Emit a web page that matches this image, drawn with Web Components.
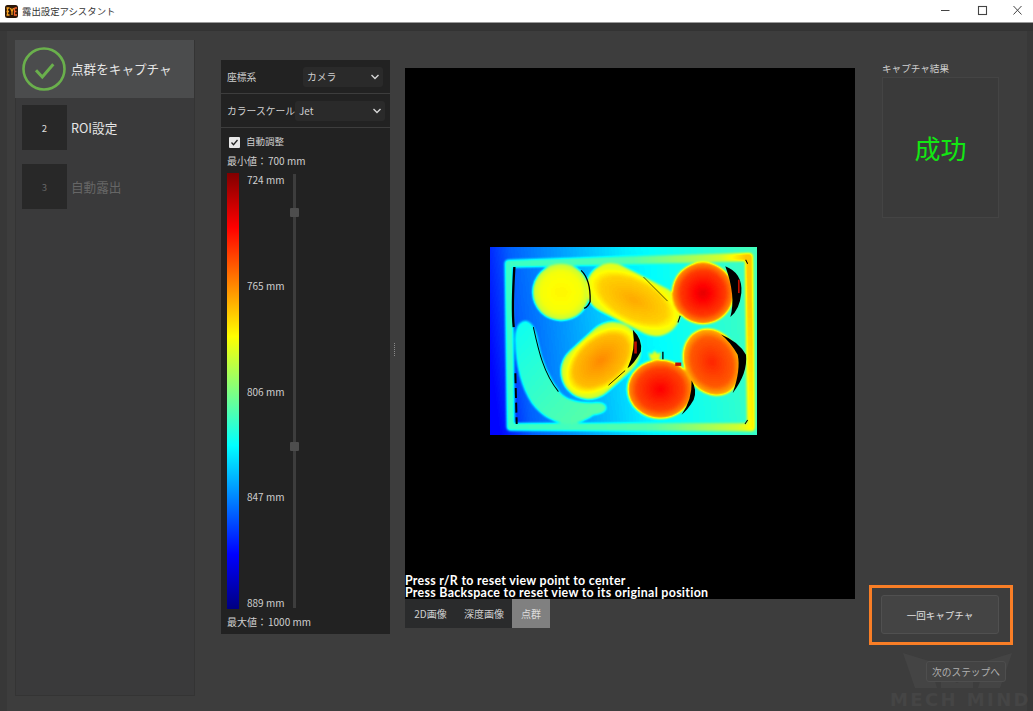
<!DOCTYPE html>
<html lang="ja">
<head>
<meta charset="utf-8">
<title>露出設定アシスタント</title>
<style>
  html, body { margin: 0; height: 100%; overflow: hidden; background: #383838; }
  body { font-family: "Noto Sans CJK JP", "Noto Sans", sans-serif; }
</style>
</head>
<body>
<assist-window>
  <title-bar slot="top">露出設定アシスタント</title-bar>
  <step-list slot="steps">
    <step-item state="done" label="点群をキャプチャ"></step-item>
    <step-item num="2" label="ROI設定"></step-item>
    <step-item num="3" state="off" label="自動露出"></step-item>
  </step-list>
  <depth-panel slot="panel"></depth-panel>
  <cloud-view slot="view"></cloud-view>
  <result-side slot="side"></result-side>
</assist-window>

<script>
const FONT = '"Noto Sans CJK JP", "Noto Sans", sans-serif';

class AssistWindow extends HTMLElement {
  connectedCallback() {
    this.attachShadow({ mode: 'open' });
    this.shadowRoot.innerHTML = `
      <style>
        :host { display: flex; flex-direction: column; width: 1033px; height: 711px; position: relative; overflow: hidden; background: #383838; }
        .strip { height: 8px; background: #333; flex: none; }
        .main { flex: 1; display: flex; min-height: 0; margin: 0 6px 0 7px; background: #3d3d3d; padding: 9px 0 15px 8px; align-items: stretch; }
        .steps { width: 180px; flex: none; margin-right: 26px; }
        .panel { width: 169px; flex: none; margin: 20px 15px 62px 0; }
        .view { width: 450px; flex: none; margin-top: 28px; }
        .side { flex: 1; min-width: 0; }
        .grip { position: absolute; left: 394px; top: 343px; width: 1px; height: 13px; border-left: 1px dotted #8a8a8a; }
      </style>
      <slot name="top"></slot>
      <div class="strip"></div>
      <div class="main">
        <div class="steps"><slot name="steps"></slot></div>
        <div class="panel"><slot name="panel"></slot></div>
        <div class="view"><slot name="view"></slot></div>
        <div class="side"><slot name="side"></slot></div>
      </div>
      <div class="grip"></div>
    `;
  }
}

class TitleBar extends HTMLElement {
  connectedCallback() {
    this.attachShadow({ mode: 'open' });
    this.shadowRoot.innerHTML = `
      <style>
        :host { display: flex; align-items: center; height: 22px; flex: none; background: #fff; border-bottom: 1px solid #9a9a9a; color: #333; font-size: 9.4px; }
        .logo { width: 13px; height: 13px; margin: 0 4px 0 5px; flex: none; }
        .name { flex: 1; }
        .btns { display: flex; }
        .btns svg { width: 36px; height: 22px; display: block; }
      </style>
      <svg class="logo" viewBox="0 0 13 13">
        <rect width="13" height="13" rx="2.500" fill="#2a1608"/>
        <path d="M1.500 3h3M2.500 3v7M1.500 6.500h2.500M1.500 10h3M5.500 3l1.500 3.500 1.500-3.500M7 6.500V10" stroke="#f7a01f" stroke-width="1.300" fill="none"/>
        <path d="M9.500 3h2.500M9.500 3v7h2.500M9.500 6.500h2" stroke="#f4642e" stroke-width="1.300" fill="none"/>
      </svg>
      <span class="name"><slot></slot></span>
      <div class="btns">
        <svg viewBox="0 0 36 22"><path d="M16 10.500h8.500" stroke="#444" fill="none"/></svg>
        <svg viewBox="0 0 36 22"><rect x="17.500" y="6.500" width="8" height="8" stroke="#444" fill="none" stroke-width="1.100"/></svg>
        <svg viewBox="0 0 36 22"><path d="M16.500 6l8 8.500M24.500 6l-8 8.500" stroke="#444" fill="none"/></svg>
      </div>
    `;
  }
}

class StepList extends HTMLElement {
  connectedCallback() {
    this.attachShadow({ mode: 'open' });
    this.shadowRoot.innerHTML = `
      <style>
        :host { display: block; box-sizing: border-box; height: 100%; background: #3a3a3b; box-shadow: inset 0 0 0 1px #343434; }
      </style>
      <slot></slot>
    `;
  }
}

class StepItem extends HTMLElement {
  connectedCallback() {
    const done = this.getAttribute('state') === 'done';
    const off = this.getAttribute('state') === 'off';
    const num = this.getAttribute('num');
    this.attachShadow({ mode: 'open' });
    this.shadowRoot.innerHTML = `
      <style>
        :host { display: flex; align-items: center; height: 59px; box-sizing: border-box; padding-left: 7px; font-size: 12.6px; color: ${off ? '#666' : '#e6e6e6'}; }
        :host([state="done"]) { height: 58px; background: #4b4c4d; margin-right: 1px; }
        .badge { width: 45px; height: 45px; flex: none; background: #282828; color: ${off ? '#666' : '#ddd'}; font-size: 9.5px; display: flex; align-items: center; justify-content: center; margin-right: 4px; }
        svg { width: 45px; height: 45px; flex: none; margin-right: 4px; }
        span { margin-top: -1px; }
      </style>
      ${done
        ? `<svg viewBox="0 0 45 45"><circle cx="22" cy="22" r="20.500" fill="none" stroke="#6ab04c" stroke-width="2.600"/><path d="M14 23.300l6.300 6.700L31.300 17.300" fill="none" stroke="#6ab04c" stroke-width="3"/></svg>`
        : `<div class="badge">${num}</div>`}
      <span>${this.getAttribute('label')}</span>
    `;
  }
}

class ComboRow extends HTMLElement {
  connectedCallback() {
    const w = this.getAttribute('box');
    this.attachShadow({ mode: 'open' });
    this.shadowRoot.innerHTML = `
      <style>
        :host { display: flex; align-items: center; background: #222; padding: 0 7px 0 6px; box-sizing: border-box; font-size: 9.8px; color: #d0d0d0; }
        .lab { flex: 1; white-space: nowrap; }
        .box { width: ${w}px; height: 20px; background: #2a2a2a; border-radius: 3px; display: flex; align-items: center; padding: 0 3px 0 4px; box-sizing: border-box; flex: none; }
        .box span { flex: 1; white-space: nowrap; }
        svg { width: 10px; height: 6px; }
      </style>
      <span class="lab">${this.getAttribute('label')}</span>
      <div class="box">
        <span>${this.getAttribute('value')}</span>
        <svg viewBox="0 0 10 6"><path d="M1.500 1l3.500 3.500L8.500 1" fill="none" stroke="#d5d5d5" stroke-width="1.400"/></svg>
      </div>
    `;
  }
}

class DepthPanel extends HTMLElement {
  connectedCallback() {
    this.attachShadow({ mode: 'open' });
    const labels = ['724', '765', '806', '847', '889'];
    this.shadowRoot.innerHTML = `
      <style>
        :host { display: flex; flex-direction: column; height: 100%; gap: 1px; font-size: 10px; color: #cfcfcf; }
        combo-row { height: 33px; flex: none; }
        .body { flex: 1; background: #222; padding: 8px 0 0 6px; display: flex; flex-direction: column; min-height: 0; }
        .auto { display: flex; align-items: center; gap: 6px; height: 12px; padding-left: 2px; }
        .auto span:last-child { margin-top: -2px; font-size: 9.5px; }
        .check { width: 11px; height: 11px; background: #e8e8e8; border-radius: 1px; display: flex; }
        .check svg { width: 11px; height: 11px; }
        .minmax { height: 14px; display: flex; align-items: center; margin: 5px 0 2px; white-space: nowrap; }
        .minmax b { font-weight: 400; margin-left: 1px; }
        .scale { flex: 1; display: flex; margin-top: 4px; min-height: 0; }
        .bar { width: 12px; flex: none; background: linear-gradient(to bottom, #800000 0%, #ff0000 12.5%, #ff8000 25%, #ffff00 37.500%, #80ff80 50%, #00ffff 62.5%, #0080ff 75%, #0000ff 87.5%, #000080 100%); }
        .ticks { width: 37px; margin: -1px 0 -1px 8px; display: flex; flex-direction: column; justify-content: space-between; white-space: nowrap; flex: none; }
        .track { width: 3px; margin: 1px 0 1px 9px; background: #3d3d3d; position: relative; }
        .knob { position: absolute; left: -3px; width: 9px; height: 9px; background: #4d4d4d; border-radius: 1px; }
        .bottom { height: 25px; display: flex; align-items: center; white-space: nowrap; }
        .bottom b { font-weight: 400; margin-left: 1px; }
      </style>
      <combo-row box="80" label="座標系" value="カメラ"></combo-row>
      <combo-row box="90" label="カラースケール" value="Jet"></combo-row>
      <div class="body">
        <div class="auto">
          <span class="check"><svg viewBox="0 0 11 11"><path d="M2.500 5.500l2 2.200 4-4.700" fill="none" stroke="#222" stroke-width="1.300"/></svg></span>
          <span>自動調整</span>
        </div>
        <div class="minmax">最小値：<b>700 mm</b></div>
        <div class="scale">
          <div class="bar"></div>
          <div class="ticks">${labels.map(v => `<span>${v} mm</span>`).join('')}</div>
          <div class="track">
            <div class="knob" style="top: 34px"></div>
            <div class="knob" style="top: 268px"></div>
          </div>
        </div>
        <div class="bottom">最大値：<b>1000 mm</b></div>
      </div>
    `;
  }
}

class CloudView extends HTMLElement {
  connectedCallback() {
    this.attachShadow({ mode: 'open' });
    const g = v => { const c = Math.round(v * 255); return `rgb(${c},${c},${c})`; };
    const grad = (id, a, b, c) => `
      <radialGradient id="${id}">
        <stop offset="0" stop-color="${g(a)}"/>
        <stop offset=".72" stop-color="${g(b)}"/>
        <stop offset="1" stop-color="${g(c)}"/>
      </radialGradient>`;
    this.shadowRoot.innerHTML = `
      <style>
        :host { display: flex; flex-direction: column; height: 560px; font-family: ${FONT}; }
        .canvas { position: relative; height: 531px; background: #000; flex: none; }
        .depth { position: absolute; left: 85px; top: 179px; width: 267px; height: 188px; display: block; }
        .hint { position: absolute; left: 0; bottom: 0; color: #fff; font: 700 12.4px/12px Lato, "Noto Sans", sans-serif; letter-spacing: .3px; white-space: nowrap; }
        .tabs { display: flex; width: 145px; height: 29px; background: #2a2b2c; font-size: 10px; color: #cfcfcf; flex: none; }
        .tab { display: flex; align-items: center; justify-content: center; white-space: nowrap; }
        .tab.on { background: #808080; color: #ddd; }
      </style>
      <div class="canvas">
        <svg class="depth" viewBox="30 22 800 563" preserveAspectRatio="none">
          <defs>
            <filter id="jet" x="0" y="0" width="1" height="1" color-interpolation-filters="sRGB">
              <feGaussianBlur stdDeviation="3"/>
              <feComponentTransfer>
                <feFuncR type="table" tableValues="0 0 0 0 .5 1 1 1 .5"/>
                <feFuncG type="table" tableValues="0 0 .5 1 1 1 .5 0 0"/>
                <feFuncB type="table" tableValues=".5 1 1 1 .5 0 0 0 0"/>
              </feComponentTransfer>
            </filter>
            <linearGradient id="floor" gradientUnits="userSpaceOnUse" x1="30" y1="340" x2="830" y2="240">
              <stop offset="0" stop-color="${g(.13)}"/>
              <stop offset=".12" stop-color="${g(.22)}"/>
              <stop offset=".55" stop-color="${g(.36)}"/>
              <stop offset="1" stop-color="${g(.44)}"/>
            </linearGradient>
            <linearGradient id="rim" gradientUnits="userSpaceOnUse" x1="80" y1="320" x2="815" y2="240">
              <stop offset="0" stop-color="${g(.43)}"/>
              <stop offset=".55" stop-color="${g(.46)}"/>
              <stop offset=".9" stop-color="${g(.58)}"/>
              <stop offset="1" stop-color="${g(.68)}"/>
            </linearGradient>
            ${grad('f1', .635, .615, .56)}
            ${grad('f2', .71, .67, .6)}
            ${grad('f3', .9, .82, .72)}
            ${grad('f4', .74, .69, .58)}
            ${grad('f5', .88, .81, .72)}
            ${grad('f6', .84, .79, .69)}
            <linearGradient id="ban" x1="0" y1="0" x2="1" y2="1">
              <stop offset="0" stop-color="${g(.385)}"/>
              <stop offset=".6" stop-color="${g(.44)}"/>
              <stop offset="1" stop-color="${g(.47)}"/>
            </linearGradient>
          </defs>
          <g filter="url(#jet)">
            <rect x="0" y="0" width="860" height="610" fill="url(#floor)"/>
            <path d="M86 72L806 52L812 562L92 560Z" fill="none" stroke="url(#rim)" stroke-width="24" stroke-linejoin="round"/>
            <circle cx="243" cy="157" r="85" fill="url(#f1)"/>
            <rect x="310" y="105" width="300" height="150" rx="75" transform="rotate(27 460 180)" fill="url(#f2)"/>
            <circle cx="668" cy="160" r="93" fill="url(#f3)"/>
            <rect x="230" y="279" width="264" height="166" rx="83" transform="rotate(-42 362 362)" fill="url(#f4)"/>
            <ellipse cx="540" cy="448" rx="98" ry="88" fill="url(#f5)"/>
            <ellipse cx="695" cy="367" rx="84" ry="104" transform="rotate(-25 695 367)" fill="url(#f6)"/>
            <path d="M505 338l10 6 8-12 8 10 12-4-6 22h-26z" fill="${g(.6)}"/>
            <path d="M105 300Q105 245 137 243Q165 247 175 310Q190 390 240 458Q270 492 350 488Q378 488 378 505Q375 520 340 525Q310 548 270 552Q200 550 155 490Q108 420 105 300Z" fill="url(#ban)"/>
          </g>
          <g fill="#000">
            <path d="M735 80Q788 100 783 160Q778 210 750 232Q768 170 735 80Z"/>
            <path d="M458 270Q488 300 482 335Q462 372 442 385Q468 330 458 270Z"/>
            <path d="M634 422Q652 450 640 480Q622 510 604 524Q636 480 634 422Z"/>
            <path d="M722 284Q775 305 797 345Q803 400 757 460Q782 390 772 345Q750 305 722 284Z"/>
          </g>
          <g fill="none" stroke="#000">
            <path d="M103 82C97 180 99 240 101 262" stroke-width="7"/>
            <path d="M106 400L110 552" stroke-width="6" stroke-dasharray="30 14"/>
            <path d="M160 262C175 330 190 400 235 455" stroke-width="3"/>
            <path d="M303 92Q332 120 330 185Q325 200 312 206" stroke-width="4"/>
            <path d="M490 112L562 184" stroke-width="2"/>
            <path d="M435 392L385 436" stroke-width="2.500"/>
            <path d="M548 336v22" stroke-width="4"/>
            <path d="M796 60l6 12M802 540l-8 12" stroke-width="3"/>
            <path d="M600 228l-7 20" stroke-width="3"/>
          </g>
          <g fill="#c01000">
            <rect x="773" y="120" width="5" height="40"/>
            <rect x="462" y="305" width="8" height="36"/>
            <rect x="585" y="368" width="18" height="10"/>
          </g>
        </svg>
        <div class="hint">Press r/R to reset view point to center<br>Press Backspace to reset view to its original position</div>
      </div>
      <div class="tabs">
        <div class="tab" style="width:51px">2D画像</div>
        <div class="tab" style="width:56px">深度画像</div>
        <div class="tab on" style="width:38px">点群</div>
      </div>
    `;
  }
}

class ResultSide extends HTMLElement {
  connectedCallback() {
    this.attachShadow({ mode: 'open' });
    this.shadowRoot.innerHTML = `
      <style>
        :host { display: flex; flex-direction: column; height: 100%; box-sizing: border-box; padding: 22px 0 0 27px; color: #d0d0d0; font-size: 9.6px; position: relative; }
        .lab { height: 13px; line-height: 13px; margin-bottom: 2px; white-space: nowrap; }
        .result { width: 117px; height: 141px; box-sizing: border-box; border: 1px solid #444; background: #3a3a3a; display: flex; align-items: center; justify-content: center; color: #12e812; font-size: 26px; flex: none; }
        .spacer { flex: 1; }
        .once { width: 118px; height: 39px; box-sizing: border-box; margin-left: -1px; background: #444; border: 1px solid #505050; border-radius: 3px; display: flex; align-items: center; justify-content: center; color: #e0e0e0; font-size: 9.5px; flex: none; position: relative; }
        .ring { position: absolute; left: -13px; top: -11px; width: 144px; height: 60px; box-sizing: border-box; border: 3px solid #f97e26; }
        .next { width: 80px; height: 21px; box-sizing: border-box; margin: 27px 0 14px 44px; background: #434343; border: 1px solid #4e4e4e; border-radius: 3px; display: flex; align-items: center; justify-content: center; color: #b0b0b0; font-size: 9.7px; flex: none; position: relative; white-space: nowrap; }
        .mark { position: absolute; right: -6px; bottom: -15px; width: 143px; height: 58px; pointer-events: none; }
        .mark svg { position: absolute; left: 13px; top: 0; width: 109px; height: 35px; }
        .mark span { position: absolute; left: 0; top: 37px; color: #454545; font: 700 18px/20px "DejaVu Sans", sans-serif; letter-spacing: 2.4px; white-space: nowrap; }
      </style>
      <div class="mark">
        <svg viewBox="0 0 109 35"><path d="M0 0l26 8 8 27H12zM109 0L83 8l-8 27h22zM38 22l16 8 16-8v13H38z" fill="#444"/></svg>
        <span>MECH MIND</span>
      </div>
      <div class="lab">キャプチャ結果</div>
      <div class="result">成功</div>
      <div class="spacer"></div>
      <div class="once">一回キャプチャ<div class="ring"></div></div>
      <div class="next">次のステップへ</div>
    `;
  }
}

customElements.define('assist-window', AssistWindow);
customElements.define('title-bar', TitleBar);
customElements.define('step-list', StepList);
customElements.define('step-item', StepItem);
customElements.define('combo-row', ComboRow);
customElements.define('depth-panel', DepthPanel);
customElements.define('cloud-view', CloudView);
customElements.define('result-side', ResultSide);
</script>
</body>
</html>
